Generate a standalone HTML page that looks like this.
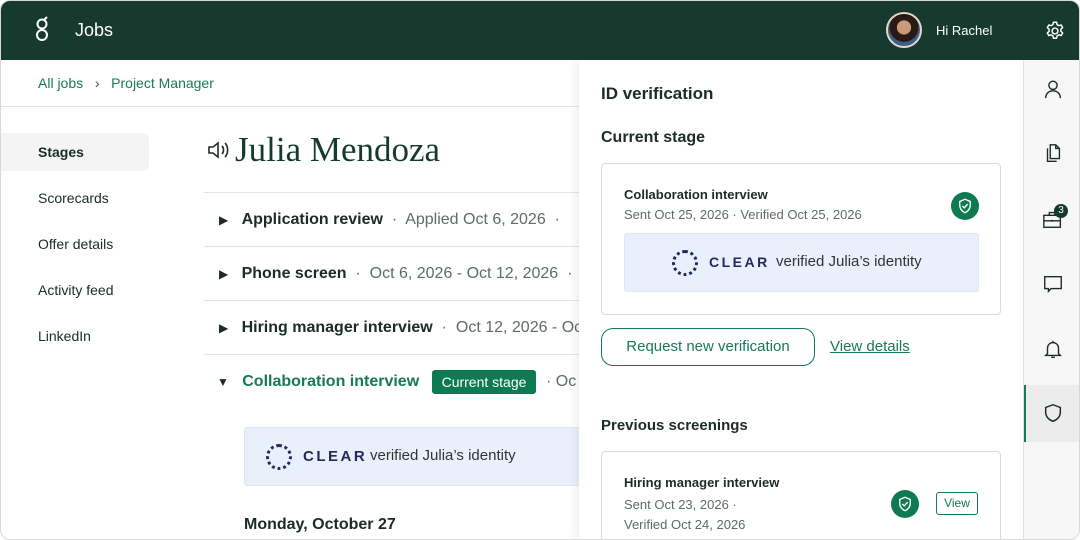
<!DOCTYPE html>
<html><head><meta charset="utf-8"><style>
*{box-sizing:border-box;margin:0;padding:0}
body{width:1080px;height:540px;overflow:hidden;background:#fff;font-family:"Liberation Sans",sans-serif;color:#1c2b25;position:relative}
.win{position:absolute;inset:0;border:1px solid #d6d9d8;border-radius:10px;overflow:hidden;background:#fff}
.hdr{position:absolute;left:-1px;top:-1px;width:1082px;height:60px;background:#163b2e;color:#fff}
.abs{position:absolute;white-space:nowrap}
.g{color:#177a55}
.gray{color:#5f6b66}
.sep{position:absolute;height:1px;background:#e2e4e3}
.card{position:absolute;border:1px solid #d9dcdb;border-radius:4px;background:#fff}
.clear{position:absolute;background:#e9f0fb;border:1px solid #dde6f3;border-radius:3px}
.badge{position:absolute;width:28px;height:28px;border-radius:50%;background:#0e7a52}
</style></head><body><div class="win">
<div class="hdr">
 <svg class="abs" style="left:35px;top:16px" width="14" height="26" viewBox="0 0 14 26" fill="none" stroke="#fff" stroke-width="2"><circle cx="7" cy="8" r="4.5"/><circle cx="7" cy="19" r="5"/><path d="M9 4l3-3"/></svg>
 <div class="abs" style="left:75px;top:20px;font-size:18px">Jobs</div>
 <div class="abs" style="left:886px;top:12px;width:36px;height:36px;border-radius:50%;background:radial-gradient(circle at 50% 42%,#c89b7b 0 28%,#2b1a14 30% 58%,#3b5f8a 60%);border:2px solid #e6d7c7"></div>
 <div class="abs" style="left:936px;top:23px;font-size:13px">Hi Rachel</div>
 <svg class="abs" style="left:1044px;top:20px" width="22" height="22" viewBox="0 0 24 24" fill="none" stroke="#fff" stroke-width="1.6" stroke-linejoin="round"><circle cx="12" cy="12" r="3.2"/><path d="M10.3 2.5h3.4l.6 2.6 1.9 1.1 2.5-.8 1.7 2.9-2 1.8v2.2l2 1.8-1.7 2.9-2.5-.8-1.9 1.1-.6 2.6h-3.4l-.6-2.6-1.9-1.1-2.5.8-1.7-2.9 2-1.8v-2.2l-2-1.8 1.7-2.9 2.5.8 1.9-1.1z"/></svg>
</div>
<div class="abs g" style="left:37px;top:74px;font-size:14px">All jobs &nbsp;&nbsp;<span style="color:#444">›</span>&nbsp;&nbsp; Project Manager</div>
<div class="sep" style="left:0;top:105px;width:578px"></div>
<div class="abs" style="left:0;top:132px;width:148px;height:38px;background:#f4f4f4;border-radius:0 6px 6px 0"></div>
<div class="abs" style="left:37px;top:143px;font-size:14px;font-weight:bold">Stages</div>
<div class="abs" style="left:37px;top:189px;font-size:14px">Scorecards</div>
<div class="abs" style="left:37px;top:235px;font-size:14px">Offer details</div>
<div class="abs" style="left:37px;top:281px;font-size:14px">Activity feed</div>
<div class="abs" style="left:37px;top:327px;font-size:14px">LinkedIn</div>
<svg class="abs" style="left:205px;top:138px" width="24" height="22" viewBox="0 0 24 22" fill="none" stroke="#1c2b25" stroke-width="1.6"><path d="M3 8h4l5-4v14l-5-4H3z"/><path d="M16 7c2 2 2 6 0 8M19 4c3.5 3.5 3.5 10.5 0 14"/></svg>
<div class="abs" style="left:234px;top:129px;font-size:35px;font-family:'Liberation Serif',serif;color:#163b2e">Julia Mendoza</div>
<div class="sep" style="left:203px;top:191px;width:375px"></div>
<div class="sep" style="left:203px;top:245px;width:375px"></div>
<div class="sep" style="left:203px;top:299px;width:375px"></div>
<div class="sep" style="left:203px;top:353px;width:375px"></div>
<div class="abs" style="left:218px;top:210px;font-size:16px"><span style="font-size:12px">▶</span>&nbsp;&nbsp; <b>Application review</b> <span class="gray">&nbsp;·&nbsp; Applied Oct 6, 2026 &nbsp;·</span></div>
<div class="abs" style="left:218px;top:264px;font-size:16px"><span style="font-size:12px">▶</span>&nbsp;&nbsp; <b>Phone screen</b> <span class="gray">&nbsp;·&nbsp; Oct 6, 2026 - Oct 12, 2026 &nbsp;·</span></div>
<div class="abs" style="left:218px;top:318px;font-size:16px"><span style="font-size:12px">▶</span>&nbsp;&nbsp; <b>Hiring manager interview</b> <span class="gray">&nbsp;·&nbsp; Oct 12, 2026 - Oct</span></div>
<div class="abs" style="left:216px;top:372px;font-size:16px"><span style="font-size:12px">▼</span>&nbsp;&nbsp; <b class="g">Collaboration interview</b></div>
<div class="abs" style="left:431px;top:369px;width:104px;height:24px;background:#0e7a52;border-radius:3px;color:#fff;font-size:14px;text-align:center;line-height:24px">Current stage</div>
<div class="abs gray" style="left:545px;top:372px;font-size:16px">· Oc</div>
<div class="clear" style="left:243px;top:426px;width:340px;height:59px"></div>
<div class="abs" style="left:265px;top:443px;width:26px;height:26px;border-radius:50%;border:3px dotted #1e2a5a"></div>
<div class="abs" style="left:302px;top:447px;font-size:15px;font-weight:bold;letter-spacing:2.5px;color:#1e2a5a">CLEAR</div>
<div class="abs" style="left:369px;top:446px;font-size:15px;color:#333">verified Julia’s identity</div>
<div class="abs" style="left:243px;top:515px;font-size:16px;font-weight:bold">Monday, October 27</div>

<div class="abs" style="left:578px;top:59px;width:445px;height:481px;background:#fff;box-shadow:-4px 0 8px rgba(0,0,0,.06)"></div>
<div class="abs" style="left:600px;top:83px;font-size:17px;font-weight:bold">ID verification</div>
<div class="abs" style="left:600px;top:128px;font-size:16px;font-weight:bold">Current stage</div>
<div class="card" style="left:600px;top:162px;width:400px;height:152px"></div>
<div class="abs" style="left:623px;top:186px;font-size:13px;font-weight:bold">Collaboration interview</div>
<div class="abs gray" style="left:623px;top:206px;font-size:13px">Sent Oct 25, 2026 · Verified Oct 25, 2026</div>
<div class="badge" style="left:950px;top:191px"></div>
<svg class="abs" style="left:955px;top:196px" width="18" height="18" viewBox="0 0 24 24" fill="none" stroke="#fff" stroke-width="1.8"><path d="M12 3l7 3v5c0 5-3 8-7 10-4-2-7-5-7-10V6z"/><path d="M8.5 12l2.5 2.5 4.5-5"/></svg>
<div class="clear" style="left:623px;top:232px;width:355px;height:59px"></div>
<div class="abs" style="left:671px;top:249px;width:26px;height:26px;border-radius:50%;border:3px dotted #1e2a5a"></div>
<div class="abs" style="left:708px;top:253px;font-size:14px;font-weight:bold;letter-spacing:2.5px;color:#1e2a5a">CLEAR</div>
<div class="abs" style="left:775px;top:252px;font-size:15px;color:#333">verified Julia’s identity</div>
<div class="abs g" style="left:600px;top:327px;width:214px;height:38px;border:1.5px solid #177a55;border-radius:12px;font-size:15px;text-align:center;line-height:36px">Request new verification</div>
<div class="abs g" style="left:829px;top:337px;font-size:15px;text-decoration:underline">View details</div>
<div class="abs" style="left:600px;top:416px;font-size:15px;font-weight:bold">Previous screenings</div>
<div class="card" style="left:600px;top:450px;width:400px;height:100px"></div>
<div class="abs" style="left:623px;top:474px;font-size:13px;font-weight:bold">Hiring manager interview</div>
<div class="abs gray" style="left:623px;top:494px;font-size:13px;line-height:20px">Sent Oct 23, 2026 ·<br>Verified Oct 24, 2026</div>
<div class="badge" style="left:890px;top:489px"></div>
<svg class="abs" style="left:895px;top:494px" width="18" height="18" viewBox="0 0 24 24" fill="none" stroke="#fff" stroke-width="1.8"><path d="M12 3l7 3v5c0 5-3 8-7 10-4-2-7-5-7-10V6z"/><path d="M8.5 12l2.5 2.5 4.5-5"/></svg>
<div class="abs g" style="left:935px;top:491px;width:42px;height:23px;border:1px solid #177a55;border-radius:3px;font-size:12px;text-align:center;line-height:21px">View</div>

<div class="abs" style="left:1022px;top:59px;width:58px;height:481px;background:#f7f7f7;border-left:1px solid #e2e4e3"></div>
<div class="abs" style="left:1023px;top:384px;width:57px;height:57px;background:#ececec;border-left:2px solid #177a55"></div>
<svg class="abs" style="left:1041px;top:77px" width="22" height="22" viewBox="0 0 24 24" fill="none" stroke="#1c2b25" stroke-width="1.5"><circle cx="12" cy="8" r="4.5"/><path d="M4 22c0-5 3.5-8 8-8s8 3 8 8"/></svg>
<svg class="abs" style="left:1041px;top:141px" width="22" height="22" viewBox="0 0 24 24" fill="none" stroke="#1c2b25" stroke-width="1.5"><path d="M9 3h6l4 4v11H9z"/><path d="M15 3v4h4"/><path d="M6 7v14h10"/></svg>
<svg class="abs" style="left:1041px;top:207px" width="22" height="22" viewBox="0 0 24 24" fill="none" stroke="#1c2b25" stroke-width="1.5"><rect x="2" y="8" width="18" height="13"/><path d="M8 8V5h6v3M2 14h18M11 13v2"/></svg>
<div class="abs" style="left:1053px;top:203px;width:14px;height:14px;border-radius:50%;background:#163b2e;color:#fff;font-size:10px;text-align:center;line-height:14px">3</div>
<svg class="abs" style="left:1041px;top:272px" width="22" height="22" viewBox="0 0 24 24" fill="none" stroke="#1c2b25" stroke-width="1.5"><path d="M3 4h18v13H10l-3 3v-3H3z"/></svg>
<svg class="abs" style="left:1041px;top:337px" width="22" height="22" viewBox="0 0 24 24" fill="none" stroke="#1c2b25" stroke-width="1.5"><path d="M6 17V11a6 6 0 0112 0v6l2 2H4z"/><path d="M12 3v2M10 21h4"/></svg>
<svg class="abs" style="left:1041px;top:401px" width="22" height="22" viewBox="0 0 24 24" fill="none" stroke="#1c2b25" stroke-width="1.6"><path d="M12 3l8 3v5c0 5-3.5 8.5-8 10-4.5-1.5-8-5-8-10V6z"/></svg>
</div></body></html>
